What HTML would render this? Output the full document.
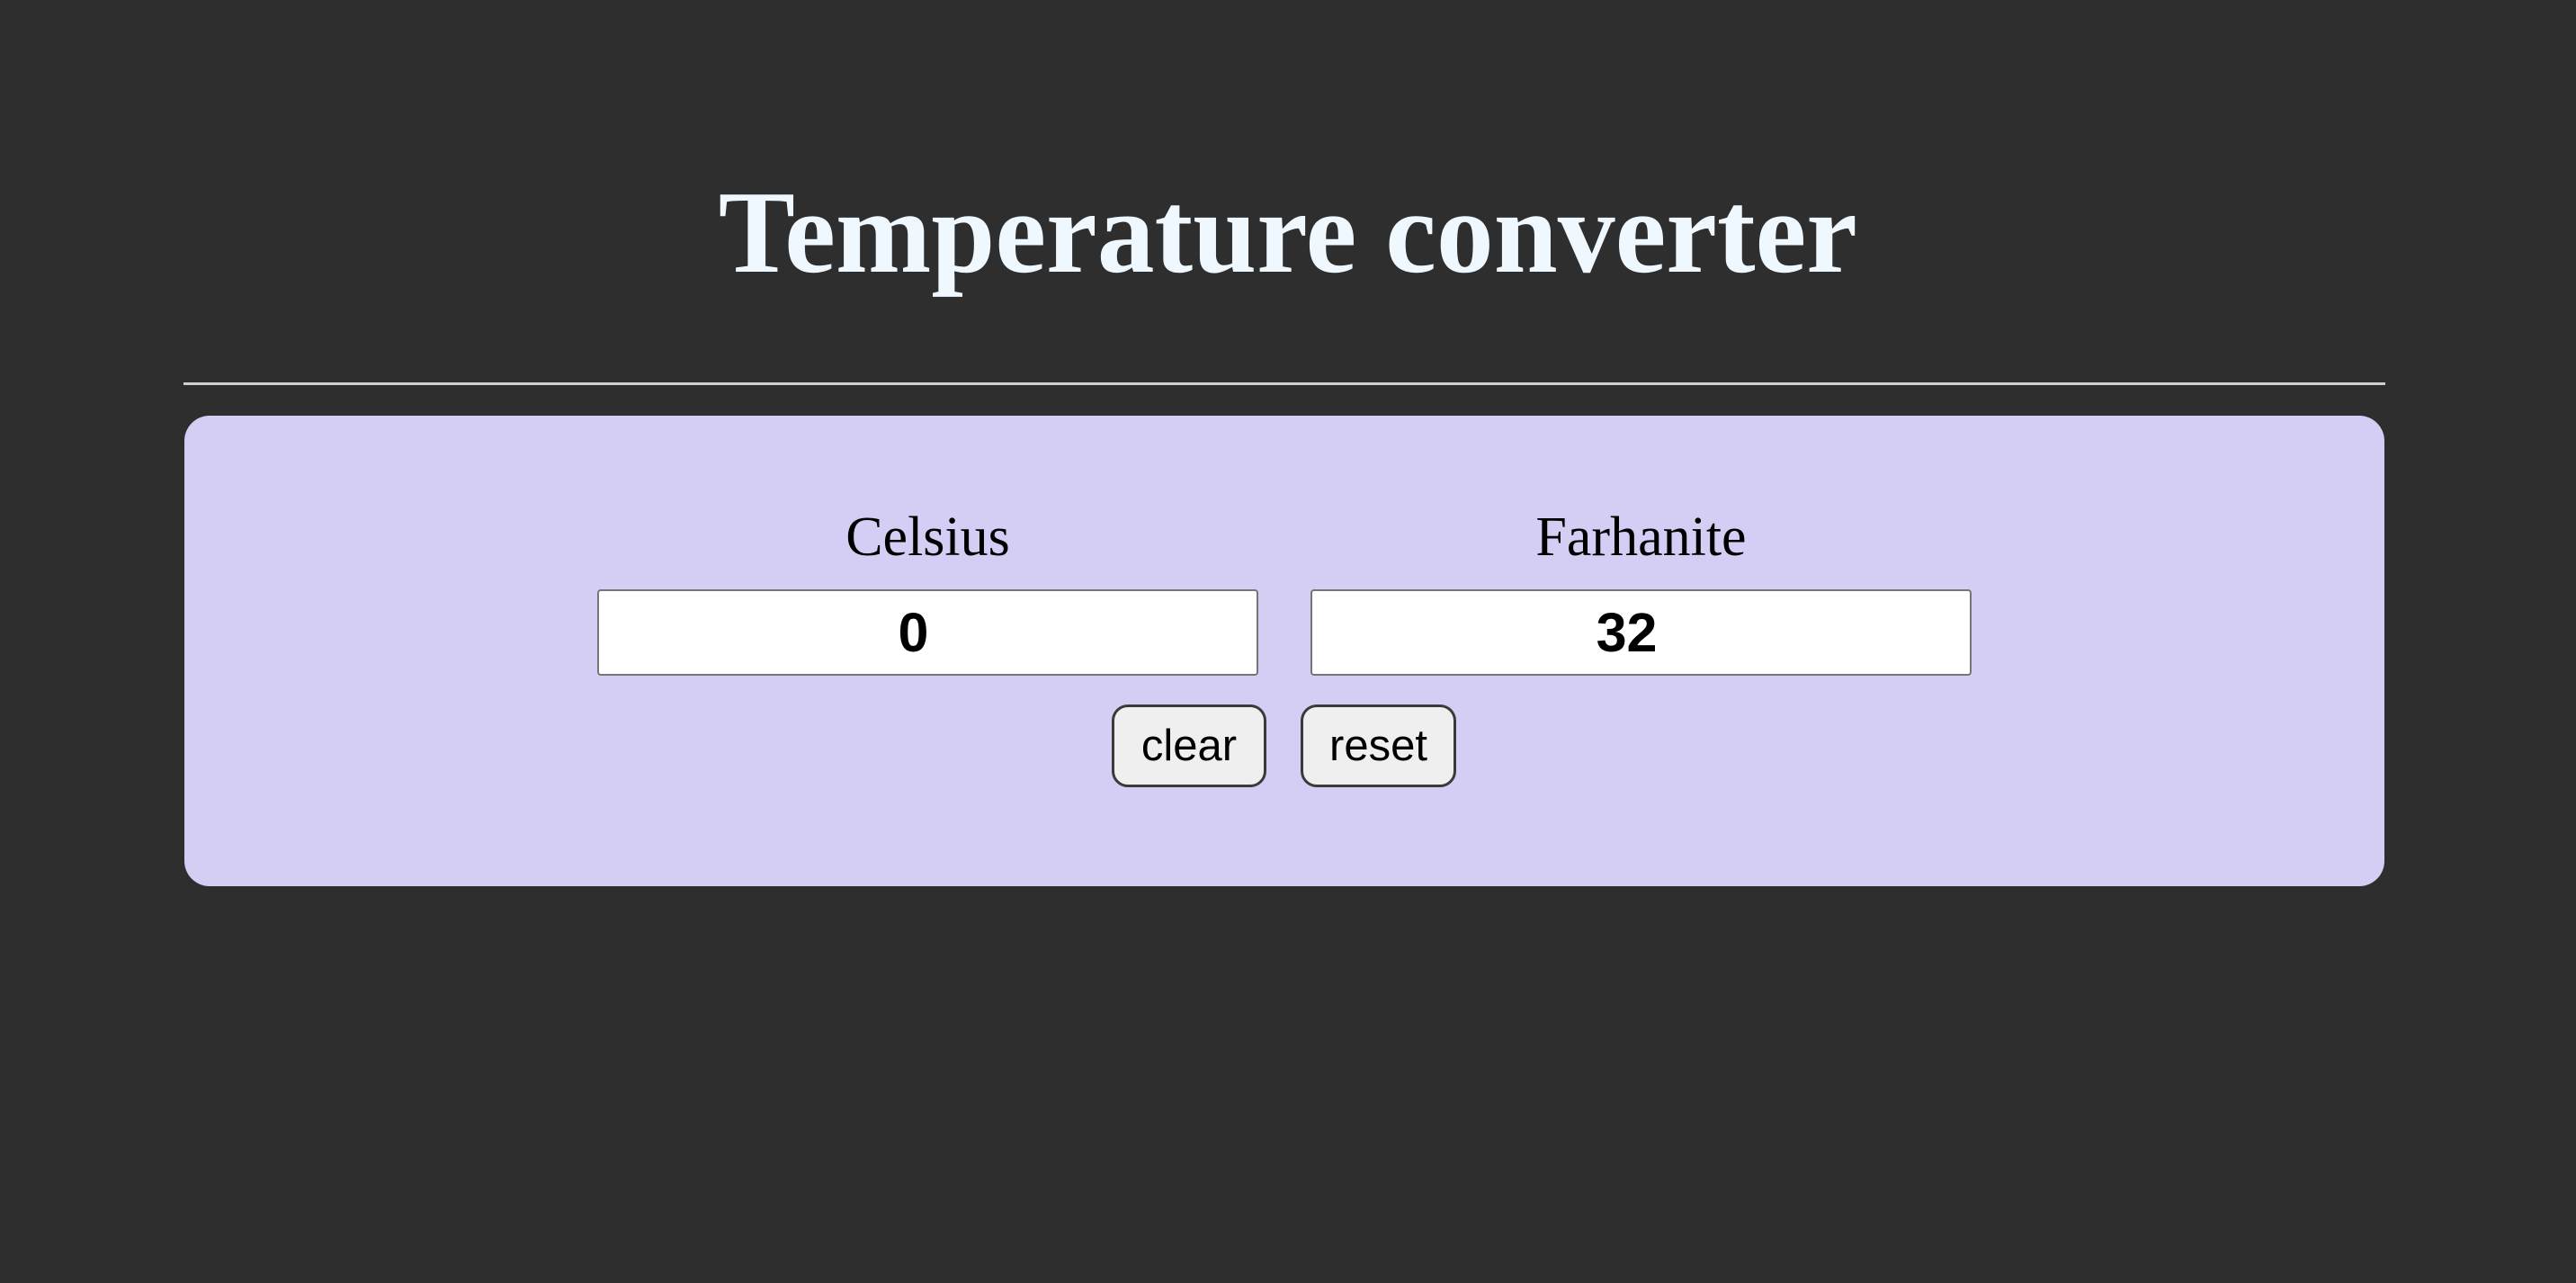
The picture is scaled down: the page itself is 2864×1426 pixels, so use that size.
<!DOCTYPE html>
<html><head><meta charset="utf-8"><style>
html,body{margin:0;padding:0;width:2864px;height:1426px;background:#2e2e2e;overflow:hidden}
h1{position:absolute;left:0;width:2864px;top:179px;margin:0;text-align:center;font-family:"Liberation Serif",serif;font-weight:bold;font-size:131px;line-height:160px;color:#f0f8ff;transform:scaleX(0.975);transform-origin:1426px 0}
.hr{position:absolute;left:204px;width:2448px;top:425px;height:3px;background:#d0d0d0}
.card{position:absolute;left:205px;top:462px;width:2446px;height:523px;background:#d4cdf4;border-radius:28px}
.lbl{position:absolute;top:557px;width:735px;text-align:center;font-family:"Liberation Serif",serif;font-size:62px;line-height:80px;color:#000}
.inp{position:absolute;top:655px;width:731px;height:92px;background:#fff;border:2px solid #767676;border-radius:4px;text-align:center;font-family:"Liberation Sans",sans-serif;font-weight:bold;font-size:61px;line-height:92px;color:#000;box-sizing:content-box}
.inp span{position:relative;left:-16px}
.btn{position:absolute;top:783px;height:86px;background:#efefef;border:3px solid #3a3a3a;border-radius:18px;text-align:center;font-family:"Liberation Sans",sans-serif;font-size:49px;line-height:86px;color:#000;box-sizing:content-box}
</style></head><body>
<h1>Temperature converter</h1>
<div class="hr"></div>
<div class="card"></div>
<div class="lbl" style="left:664px">Celsius</div>
<div class="lbl" style="left:1457px">Farhanite</div>
<div class="inp" style="left:664px"><span>0</span></div>
<div class="inp" style="left:1457px"><span>32</span></div>
<div class="btn" style="left:1236px;width:166px">clear</div>
<div class="btn" style="left:1446px;width:167px">reset</div>
</body></html>
